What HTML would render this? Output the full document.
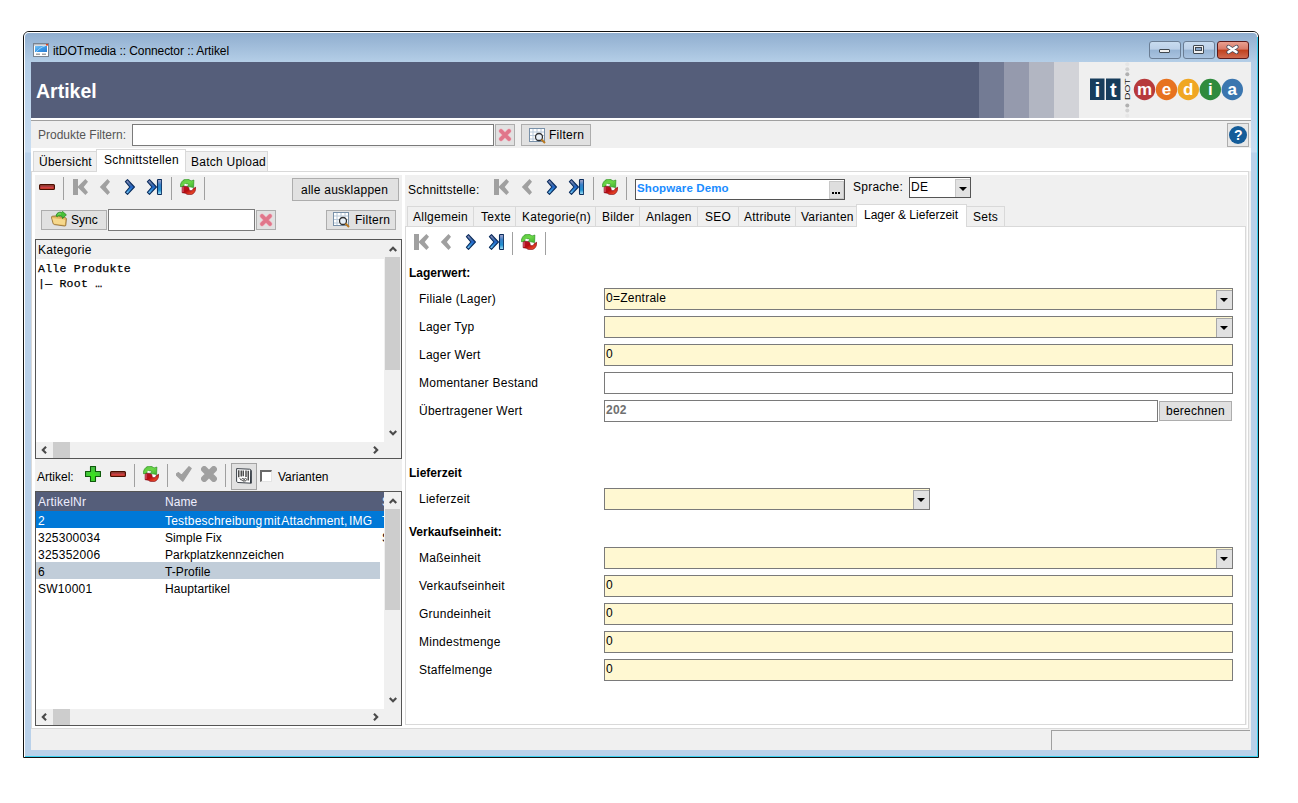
<!DOCTYPE html>
<html><head><meta charset="utf-8">
<style>
*{margin:0;padding:0;box-sizing:border-box}
html,body{width:1298px;height:803px;overflow:hidden;background:#fff;font-family:"Liberation Sans",sans-serif;font-size:12px;color:#000}
.a{position:absolute}
.t{position:absolute;white-space:nowrap;line-height:14px;letter-spacing:0.25px}
.btn{position:absolute;background:#e1e1e1;border:1px solid #adadad}
.fld{position:absolute;background:#fff;border:1px solid #7a7a7a}
.yel{background:#fff8d2}
.sep{position:absolute;width:1px;background:#a0a0a0}
.tab{position:absolute;background:#f0f0f0;border:1px solid #d9d9d9;border-bottom:none}
.dd{position:absolute;background:#e1e1e1;border-left:1px solid #a8a8a8;border-top:1px solid #a8a8a8}
.dd:after{content:"";position:absolute;left:3px;top:7px;border-left:4px solid transparent;border-right:4px solid transparent;border-top:4.5px solid #000}
</style></head><body>

<svg width="0" height="0" style="position:absolute">
<defs>
<linearGradient id="gBlue" x1="0" y1="0" x2="0" y2="1">
<stop offset="0" stop-color="#a898c0"/><stop offset="0.3" stop-color="#4a70a8"/><stop offset="0.5" stop-color="#1f62c8"/><stop offset="0.75" stop-color="#3a9ae0"/><stop offset="1" stop-color="#b0dcf8"/>
</linearGradient>
<linearGradient id="gBlue2" x1="0" y1="0" x2="0" y2="1">
<stop offset="0" stop-color="#b0a8c8"/><stop offset="0.35" stop-color="#3a80c8"/><stop offset="0.7" stop-color="#2090d0"/><stop offset="1" stop-color="#b0e8f8"/>
</linearGradient>
<linearGradient id="gRed" x1="0" y1="0" x2="0" y2="1">
<stop offset="0" stop-color="#a85a40"/><stop offset="0.4" stop-color="#a83c40"/><stop offset="0.7" stop-color="#e84040"/><stop offset="1" stop-color="#f06a40"/>
</linearGradient>
<symbol id="iFirstG" viewBox="0 0 16 16"><path d="M0,0H5V16H0Z M4.4,8L12.4,0L15,2.7L10.7,8L15,13.3L12.4,16Z" fill="#a0a0a0"/></symbol>
<symbol id="iPrevG" viewBox="0 0 16 16"><path d="M2.8,8L10.5,0L13,2.7L8.9,8L13,13.3L10.5,16Z" fill="#a0a0a0"/></symbol>
<symbol id="iNextB" viewBox="0 0 16 16"><path d="M5.5,0.6L12.4,8L5.5,15.4L3.4,13.3L7.8,8L3.4,2.7Z" fill="url(#gBlue)" stroke="#0a2d5e" stroke-width="1.1" stroke-linejoin="round"/></symbol>
<symbol id="iLastB" viewBox="0 0 16 16"><path d="M3.5,0.6L10.4,8L3.5,15.4L1.4,13.3L5.9,8L1.4,2.7Z" fill="url(#gBlue)" stroke="#0a2d5e" stroke-width="1.1" stroke-linejoin="round"/><rect x="11.5" y="0.5" width="4.2" height="15" rx="0.8" fill="url(#gBlue2)" stroke="#0a2d5e" stroke-width="1.1"/></symbol>
<symbol id="iRefresh" viewBox="0 0 16 16">
<linearGradient id="gRR" x1="0" y1="0" x2="1" y2="1"><stop offset="0" stop-color="#b01830"/><stop offset="0.45" stop-color="#b80c10"/><stop offset="0.8" stop-color="#e84828"/><stop offset="1" stop-color="#d02040"/></linearGradient>
<linearGradient id="gGG" x1="0" y1="0" x2="1" y2="1"><stop offset="0" stop-color="#58c040"/><stop offset="0.5" stop-color="#6cd848"/><stop offset="1" stop-color="#40b030"/></linearGradient>
<ellipse cx="10.9" cy="9.9" rx="2" ry="1.6" fill="#fff"/>
<path d="M2.1,7.1 L7.5,7.5 C8.6,8 9,9 9,10 C9.3,11.3 10.2,11.8 11.2,11.6 C12.2,11.4 13,10.5 13.3,9.4 L15.9,8.2 C16,11 14.5,14.8 11.5,15.5 L7.4,15.6 L5.2,14.2 L2.1,13.7 Z" fill="url(#gRR)" stroke="#7a0818" stroke-width="0.6"/>
<path d="M3,8 L3,13" stroke="#e07088" stroke-width="0.9"/>
<path d="M0.3,7.7 C0.3,3.5 2.8,0.3 6.5,0.2 C8.5,0.2 9.8,0.9 11,1.9 L13.9,1 L13.6,8.6 L7.2,7.3 L9.1,5.7 C8.3,5 7.3,4.6 6.3,4.7 C5,4.9 4.2,5.8 4,6.6 L2.5,7.4 Z" fill="url(#gGG)" stroke="#208818" stroke-width="0.6"/>
<ellipse cx="5.3" cy="5.6" rx="0.9" ry="0.8" fill="#fff"/>
</symbol>
<symbol id="iX" viewBox="0 0 14 14"><path d="M3,3L11,11M11,3L3,11" stroke="#f0b4c0" stroke-width="4.6" stroke-linecap="round"/><path d="M3,3L11,11M11,3L3,11" stroke="#e0768a" stroke-width="3.7" stroke-linecap="round"/></symbol>
<symbol id="iFilter" viewBox="0 0 18 16">
<rect x="0.5" y="0.5" width="15" height="13" fill="#fff" stroke="#7890a8"/>
<path d="M4,1V13 M8,1V13 M12,1V13 M1,4H15 M1,7.5H15 M1,11H15" stroke="#b8c8d8" stroke-width="1"/>
<circle cx="10" cy="9" r="3.5" fill="#e8f0f8" stroke="#303030" stroke-width="1.3"/>
<path d="M12.5,11.5L16,15" stroke="#b87820" stroke-width="2"/>
</symbol>
<symbol id="iMinus" viewBox="0 0 16 6"><rect x="0.6" y="0.6" width="14.8" height="4.8" rx="0.9" fill="url(#gRed)" stroke="#4a0e00" stroke-width="1.2"/></symbol>
<symbol id="iFolder" viewBox="0 0 16 16">
<path d="M0.4,6.2 C0.4,5.6 1,5.2 1.6,5.2 L4.5,5 L5.5,4.2 L8,4.6 L8.8,5.8 L13.5,6.4 C14.6,6.5 15.4,7 15.4,8 L14.8,14.2 C14.7,14.9 14.2,15.2 13.5,15 L3.5,13.6 C2.8,13.5 2.3,13 2.1,12.4 Z" fill="#e2b860" stroke="#8a6428" stroke-width="0.8"/>
<path d="M1.2,7 L12.8,8.4 C13.8,8.5 14.3,9 14.2,9.8 L13.8,14 L3.6,12.8 C3,12.7 2.7,12.3 2.6,11.8 Z" fill="#f6d88c"/>
<path d="M5.2,5.2 C5,2.2 8,0.6 10.5,1.4 L11.5,0.4 L15.4,3.8 L11.6,7.6 L11.2,5.6 C9.5,4.6 7.6,4.4 6.2,5.8 Z" fill="#48c038" stroke="#1a7a14" stroke-width="0.7"/>
<path d="M6.8,3.6 C7.6,2.8 8.8,2.6 9.8,3" stroke="#a0f080" stroke-width="0.8" fill="none"/>
</symbol>
<symbol id="iPlus" viewBox="0 0 16 16"><radialGradient id="gPl" cx="0.5" cy="0.62" r="0.6"><stop offset="0" stop-color="#38e818"/><stop offset="1" stop-color="#48b848"/></radialGradient><path d="M5.5,0.5H10.5V5.5H15.5V10.5H10.5V15.5H5.5V10.5H0.5V5.5H5.5Z" fill="url(#gPl)" stroke="#0e5a0a" stroke-width="1.1" stroke-linejoin="round"/></symbol>
<symbol id="iCheckG" viewBox="0 0 16 16"><path d="M0.6,7.8 L2.5,6.6 L5.6,9.2 L13,0.7 L15.2,2.5 L6.9,15.2 L0.6,9.2 Z" fill="#a0a0a0" stroke="#a0a0a0" stroke-width="1.2" stroke-linejoin="round"/></symbol>
<symbol id="iXG" viewBox="0 0 16 16"><path d="M3.25,3.25L12.75,12.75M12.75,3.25L3.25,12.75" stroke="#a0a0a0" stroke-width="6.3" stroke-linecap="round"/></symbol>
<symbol id="iBarcode" viewBox="0 0 16 16">
<path d="M0.6,0.6 L13.5,1.2 C14.5,1.3 15.3,1.8 15.3,2.8 L15.3,15.2 L2,14.5 C1,14.4 0.6,13.8 0.6,13 Z" fill="#fff" stroke="#3a4048" stroke-width="1"/>
<path d="M14.2,1.5 L15.3,2.8 L15.3,15.2 L14,14.9 Z" fill="#303840"/>
<path d="M2.8,2.2V9.2 M5.2,2.4V8.5 M7.2,2.5V8.2 M10,2.6V9 M12.2,2.8V12.6" stroke="#222" stroke-width="1.2"/>
<circle cx="6.8" cy="11.5" r="1.1" fill="none" stroke="#333" stroke-width="0.8"/>
<circle cx="9.5" cy="11.5" r="1.1" fill="none" stroke="#333" stroke-width="0.8"/>
<circle cx="8.2" cy="13.4" r="0.8" fill="none" stroke="#555" stroke-width="0.6"/>
<path d="M3.8,10.2 L5.2,12.4" stroke="#444" stroke-width="0.9"/>
</symbol>
<symbol id="aUp" viewBox="0 0 8 6"><path d="M0,4.3L4,0.3L8,4.3L6.5,5.8L4,3.3L1.5,5.8Z" fill="#4a4a4a"/></symbol>
<symbol id="aDown" viewBox="0 0 8 6"><path d="M0,1.7L4,5.7L8,1.7L6.5,0.2L4,2.7L1.5,0.2Z" fill="#4a4a4a"/></symbol>
<symbol id="aLeft" viewBox="0 0 6 8"><path d="M4.3,0L0.3,4L4.3,8L5.8,6.5L3.3,4L5.8,1.5Z" fill="#4a4a4a"/></symbol>
<symbol id="aRight" viewBox="0 0 6 8"><path d="M1.7,0L5.7,4L1.7,8L0.2,6.5L2.7,4L0.2,1.5Z" fill="#4a4a4a"/></symbol>
</defs></svg>

<!-- window frame -->
<div class="a" style="left:23px;top:31px;width:1236px;height:727px;border:1px solid #111;border-radius:6px 6px 0 0;background:#b9d1ea"></div>
<div class="a" style="left:24px;top:32px;width:1234px;height:725px;border:1px solid #fff;border-radius:5px 5px 0 0;border-bottom:none;background:linear-gradient(#90aecf,#b4cee7 29px,#bcd4ec 60px,#c9ddf1 119px,#b9d1ea 120px,#b9d1ea 100%)"></div>
<div class="a" style="left:25px;top:756px;width:1233px;height:1px;background:#3ad0f0"></div>
<div class="a" style="left:1257px;top:37px;width:1px;height:720px;background:#3ad0f0"></div>
<!-- title icon -->
<svg class="a" style="left:33px;top:43px" width="16" height="14" viewBox="0 0 16 14">
<rect x="0.5" y="0.5" width="15" height="13" fill="#fff" stroke="#7a8490"/>
<rect x="1" y="1" width="14" height="1.5" fill="#b8bcc4"/>
<rect x="13" y="1" width="2" height="1.5" fill="#e04020"/>
<defs><linearGradient id="gScr" x1="0" y1="0" x2="1" y2="1"><stop offset="0" stop-color="#7cc4f4"/><stop offset="0.5" stop-color="#3c9ae8"/><stop offset="1" stop-color="#2a7ad0"/></linearGradient></defs>
<rect x="2" y="3" width="12" height="6" fill="url(#gScr)"/>
<path d="M3,9 C6,6 8,4 12,3" stroke="#a8dcfc" stroke-width="0.8" fill="none"/>
<rect x="3" y="10.5" width="4" height="1.5" fill="#a0a4a8"/>
<rect x="9" y="10.5" width="4" height="1.5" fill="#a0a4a8"/>
</svg>
<div class="t" style="left:53px;top:44px;font-size:12px;letter-spacing:-0.08px;color:#000">itDOTmedia :: Connector :: Artikel</div>

<!-- content background -->
<div class="a" style="left:31px;top:62px;width:1220px;height:688px;background:#f0f0f0"></div>

<!-- header -->
<div class="a" style="left:31px;top:62px;width:1220px;height:56px;background:#efefef"></div>
<div class="a" style="left:31px;top:62px;width:948px;height:56px;background:#555e7a"></div>
<div class="a" style="left:979px;top:62px;width:25px;height:56px;background:#737b94"></div>
<div class="a" style="left:1004px;top:62px;width:25px;height:56px;background:#959aad"></div>
<div class="a" style="left:1029px;top:62px;width:25px;height:56px;background:#b2b6c2"></div>
<div class="a" style="left:1054px;top:62px;width:25px;height:56px;background:#d2d3d8"></div>
<div class="t" style="left:36px;top:79px;font-size:19.5px;line-height:24px;font-weight:bold;color:#fff;letter-spacing:0">Artikel</div>
<div class="a" style="left:31px;top:118px;width:1220px;height:2px;background:#fff"></div>
<div class="a" style="left:31px;top:120px;width:1220px;height:1px;background:#a0a0a0"></div>



<!-- logo -->
<svg class="a" style="left:1085px;top:62px" width="166" height="56" viewBox="0 0 166 56">
<rect x="5" y="16.5" width="14.5" height="21.5" fill="#173d5c"/>
<rect x="21" y="16.5" width="14.5" height="21.5" fill="#173d5c"/>
<text x="12.3" y="34.5" text-anchor="middle" font-family="Liberation Sans" font-weight="bold" font-size="21" fill="#fff">i</text>
<text x="28.3" y="34.5" text-anchor="middle" font-family="Liberation Sans" font-weight="bold" font-size="20" fill="#fff">t</text>
<circle cx="42.3" cy="2.2" r="2" fill="#e6e6e6"/>
<circle cx="42.3" cy="7.2" r="2" fill="#d2d2d2"/>
<circle cx="42.3" cy="12.2" r="2" fill="#b0b0b0"/>
<circle cx="42.3" cy="43.5" r="2" fill="#b0b0b0"/>
<circle cx="42.3" cy="48.6" r="2" fill="#d2d2d2"/>
<circle cx="42.3" cy="53.7" r="2" fill="#e6e6e6"/>
<text x="0" y="0" transform="translate(45.4,38) rotate(-90)" font-family="Liberation Sans" font-size="7.4" fill="#111" textLength="21.6" lengthAdjust="spacingAndGlyphs" style="letter-spacing:0">DOT</text>
<circle cx="59.5" cy="27.5" r="10.7" fill="#b73a3c"/>
<circle cx="81.5" cy="27.5" r="10.7" fill="#e7721f"/>
<circle cx="103.3" cy="27.5" r="10.7" fill="#f0a723"/>
<circle cx="125.3" cy="27.5" r="10.7" fill="#2f8b3d"/>
<circle cx="147.3" cy="27.5" r="10.7" fill="#3b76af"/>
<text x="59.5" y="33.3" text-anchor="middle" font-family="Liberation Sans" font-weight="bold" font-size="17" fill="#fff">m</text>
<text x="81.5" y="33.3" text-anchor="middle" font-family="Liberation Sans" font-weight="bold" font-size="17" fill="#fff">e</text>
<text x="103.3" y="33.3" text-anchor="middle" font-family="Liberation Sans" font-weight="bold" font-size="17" fill="#fff">d</text>
<text x="125.3" y="33.3" text-anchor="middle" font-family="Liberation Sans" font-weight="bold" font-size="17" fill="#fff">i</text>
<text x="147.3" y="33.3" text-anchor="middle" font-family="Liberation Sans" font-weight="bold" font-size="17" fill="#fff">a</text>
</svg>

<!-- window buttons -->
<div class="a" style="left:1149px;top:41px;width:32px;height:18px;border:1px solid #6a7d94;border-radius:3px;background:linear-gradient(#c8dbef 0,#bcd0e8 45%,#97b4d4 50%,#a9c3e0 100%)"></div>
<div class="a" style="left:1159px;top:49px;width:11px;height:4px;border:1px solid #404850;border-radius:1px;background:#f0f0f0"></div>
<div class="a" style="left:1183px;top:41px;width:32px;height:18px;border:1px solid #6a7d94;border-radius:3px;background:linear-gradient(#c8dbef 0,#bcd0e8 45%,#97b4d4 50%,#a9c3e0 100%)"></div>
<div class="a" style="left:1193px;top:45px;width:11px;height:9px;border:1px solid #404850;border-radius:1px;background:#f0f0f0"></div>
<div class="a" style="left:1195px;top:47px;width:7px;height:4px;background:#8aa8cc;border:1px solid #404850"></div>
<div class="a" style="left:1217px;top:41px;width:32px;height:18px;border:1px solid #5a1a1a;border-radius:3px;background:linear-gradient(#eaa090 0,#d87a68 45%,#c0401c 50%,#d06a50 100%)"></div>
<svg class="a" style="left:1226px;top:44px" width="13" height="11" viewBox="0 0 13 11"><path d="M2.5,2.9 L10.5,8.1 M10.5,2.9 L2.5,8.1" stroke="#3c4456" stroke-width="4.1" stroke-linecap="round"/><path d="M2.5,2.9 L10.5,8.1 M10.5,2.9 L2.5,8.1" stroke="#fff" stroke-width="2.6" stroke-linecap="round"/></svg>

<!-- filter row -->
<div class="t" style="left:38px;top:128px;color:#555;letter-spacing:0">Produkte Filtern:</div>
<div class="fld" style="left:132px;top:124px;width:362px;height:22px"></div>
<div class="btn" style="left:495px;top:124px;width:20px;height:22px"></div>
<svg class="a" style="left:498px;top:128px" width="14" height="14"><use href="#iX"/></svg>
<div class="btn" style="left:521px;top:124px;width:70px;height:22px"></div>
<svg class="a" style="left:529px;top:128px" width="18" height="16"><use href="#iFilter"/></svg>
<div class="t" style="left:549px;top:128px">Filtern</div>
<div class="btn" style="left:1227px;top:123px;width:22px;height:24px;background:#e8e8e8"></div>
<div class="a" style="left:1229px;top:126px;width:18px;height:18px;border-radius:50%;background:#145c99"></div>
<div class="t" style="left:1234px;top:128px;font-weight:bold;color:#fff;font-size:14px;letter-spacing:0">?</div>

<!-- top tabs row -->
<div class="a" style="left:31px;top:148px;width:1220px;height:23px;background:#fff"></div>
<div class="tab" style="left:33px;top:151px;width:64px;height:20px"></div>
<div class="t" style="left:39px;top:155px">Übersicht</div>
<div class="a" style="left:96px;top:149px;width:90px;height:23px;background:#fff;border:1px solid #d9d9d9;border-bottom:none"></div>
<div class="t" style="left:104px;top:153px">Schnittstellen</div>
<div class="tab" style="left:185px;top:151px;width:83px;height:20px"></div>
<div class="t" style="left:191px;top:155px">Batch Upload</div>

<!-- main panel -->
<div class="a" style="left:31px;top:171px;width:1218px;height:558px;background:#fff;border:1px solid #d9d9d9"></div>
<div class="a" style="left:35px;top:175px;width:367px;height:550px;background:#f0f0f0"></div>
<div class="a" style="left:405px;top:175px;width:842px;height:550px;background:#f0f0f0"></div>
<div class="a" style="left:97px;top:171px;width:88px;height:1px;background:#fff"></div>

<!-- LEFT PANEL -->
<svg class="a" style="left:39px;top:184px" width="16" height="6"><use href="#iMinus"/></svg>
<div class="sep" style="left:63px;top:177px;height:23px"></div>
<svg class="a" style="left:73px;top:179px" width="16" height="16"><use href="#iFirstG"/></svg>
<svg class="a" style="left:97px;top:179px" width="16" height="16"><use href="#iPrevG"/></svg>
<svg class="a" style="left:122px;top:179px" width="16" height="16"><use href="#iNextB"/></svg>
<svg class="a" style="left:146px;top:179px" width="16" height="16"><use href="#iLastB"/></svg>
<div class="sep" style="left:171px;top:177px;height:23px"></div>
<svg class="a" style="left:180px;top:179px" width="16" height="16"><use href="#iRefresh"/></svg>
<div class="sep" style="left:204px;top:177px;height:23px"></div>
<div class="btn" style="left:292px;top:178px;width:107px;height:23px"></div>
<div class="t" style="left:301px;top:183px">alle ausklappen</div>

<div class="btn" style="left:41px;top:210px;width:66px;height:20px"></div>
<svg class="a" style="left:51px;top:211px" width="16" height="16"><use href="#iFolder"/></svg>
<div class="t" style="left:71px;top:213px;letter-spacing:0">Sync</div>
<div class="fld" style="left:108px;top:209px;width:147px;height:22px"></div>
<div class="btn" style="left:256px;top:210px;width:20px;height:20px"></div>
<svg class="a" style="left:259px;top:213px" width="14" height="14"><use href="#iX"/></svg>
<div class="btn" style="left:326px;top:210px;width:70px;height:20px"></div>
<svg class="a" style="left:333px;top:212px" width="18" height="16"><use href="#iFilter"/></svg>
<div class="t" style="left:355px;top:213px">Filtern</div>

<!-- category tree -->
<div class="a" style="left:35px;top:239px;width:367px;height:220px;border:1px solid #555;background:#fff"></div>
<div class="a" style="left:36px;top:240px;width:348px;height:19px;background:#f0f0f0"></div>
<div class="t" style="left:38px;top:243px">Kategorie</div>
<div class="t" style="left:38px;top:262px;font-family:'Liberation Mono',monospace;font-size:11.5px;-webkit-text-stroke:0.25px #000">Alle Produkte</div>
<div class="t" style="left:38px;top:277px;font-family:'Liberation Mono',monospace;font-size:11.5px;-webkit-text-stroke:0.25px #000">|— Root …</div>
<div class="a" style="left:384px;top:240px;width:17px;height:202px;background:#f0f0f0"></div>
<div class="a" style="left:385px;top:257px;width:15px;height:113px;background:#cdcdcd"></div>
<svg class="a" style="left:389px;top:246px" width="8" height="6"><use href="#aUp"/></svg>
<svg class="a" style="left:389px;top:430px" width="8" height="6"><use href="#aDown"/></svg>
<div class="a" style="left:36px;top:442px;width:365px;height:16px;background:#f0f0f0"></div>
<div class="a" style="left:53px;top:442px;width:17px;height:16px;background:#cdcdcd"></div>
<svg class="a" style="left:41px;top:446px" width="6" height="8"><use href="#aLeft"/></svg>
<svg class="a" style="left:373px;top:446px" width="6" height="8"><use href="#aRight"/></svg>

<!-- articles toolbar -->
<div class="t" style="left:37px;top:470px;letter-spacing:0">Artikel:</div>
<svg class="a" style="left:85px;top:466px" width="16" height="16"><use href="#iPlus"/></svg>
<svg class="a" style="left:110px;top:471px" width="16" height="6"><use href="#iMinus"/></svg>
<div class="sep" style="left:134px;top:464px;height:23px"></div>
<svg class="a" style="left:143px;top:466px" width="16" height="16"><use href="#iRefresh"/></svg>
<div class="sep" style="left:167px;top:464px;height:23px"></div>
<svg class="a" style="left:176px;top:466px" width="16" height="16"><use href="#iCheckG"/></svg>
<svg class="a" style="left:201px;top:466px" width="16" height="16"><use href="#iXG"/></svg>
<div class="sep" style="left:225px;top:464px;height:23px"></div>
<div class="btn" style="left:231px;top:463px;width:26px;height:27px;background:#e1e1e1;border-color:#a4a4a4"></div>
<svg class="a" style="left:236px;top:468px" width="16" height="16"><use href="#iBarcode"/></svg>
<div class="a" style="left:260px;top:470px;width:12px;height:12px;background:#fff;border:2px solid #6a6a6a;border-right:1px solid #e4e4e4;border-bottom:1px solid #e4e4e4"></div>
<div class="t" style="left:278px;top:470px;letter-spacing:0">Varianten</div>

<!-- articles table -->
<div class="a" style="left:35px;top:491px;width:367px;height:235px;border:1px solid #555;background:#fff"></div>
<div class="a" style="left:36px;top:492px;width:348px;height:19px;background:#555e7a"></div>
<div class="t" style="left:38px;top:495px;color:#eef">ArtikelNr</div>
<div class="t" style="left:165px;top:495px;letter-spacing:0.08px;color:#eef">Name</div>
<div class="a" style="left:36px;top:511px;width:348px;height:17px;background:#0078d7"></div>
<div class="a" style="left:36px;top:562px;width:344px;height:17px;background:#c1cdd9"></div>
<div class="t" style="left:38px;top:514px;color:#fff">2</div>
<div class="t" style="left:165px;top:514px;letter-spacing:0.2px;color:#fff;word-spacing:-2px">Testbeschreibung mit Attachment, IMG</div>
<div class="t" style="left:38px;top:531px">325300034</div>
<div class="t" style="left:165px;top:531px;letter-spacing:0.08px">Simple Fix</div>
<div class="t" style="left:38px;top:548px">325352006</div>
<div class="t" style="left:165px;top:548px;letter-spacing:0.08px">Parkplatzkennzeichen</div>
<div class="t" style="left:38px;top:565px">6</div>
<div class="t" style="left:165px;top:565px;letter-spacing:0.08px">T-Profile</div>
<div class="t" style="left:38px;top:582px">SW10001</div>
<div class="t" style="left:165px;top:582px;letter-spacing:0.08px">Hauptartikel</div>
<div class="a" style="left:381px;top:492px;width:3px;height:53px;overflow:hidden"><div class="t" style="left:1px;top:3px;color:#eef">S</div><div class="t" style="left:1px;top:22px;color:#fff">T</div><div class="t" style="left:1px;top:39px">S</div></div>
<div class="a" style="left:384px;top:492px;width:17px;height:217px;background:#f0f0f0"></div>
<div class="a" style="left:385px;top:509px;width:15px;height:101px;background:#cdcdcd"></div>
<svg class="a" style="left:389px;top:498px" width="8" height="6"><use href="#aUp"/></svg>
<svg class="a" style="left:389px;top:697px" width="8" height="6"><use href="#aDown"/></svg>
<div class="a" style="left:36px;top:709px;width:365px;height:16px;background:#f0f0f0"></div>
<div class="a" style="left:53px;top:709px;width:17px;height:16px;background:#cdcdcd"></div>
<svg class="a" style="left:41px;top:713px" width="6" height="8"><use href="#aLeft"/></svg>
<svg class="a" style="left:373px;top:713px" width="6" height="8"><use href="#aRight"/></svg>

<!-- RIGHT PANEL -->
<div class="t" style="left:408px;top:183px">Schnittstelle:</div>
<svg class="a" style="left:494px;top:179px" width="16" height="16"><use href="#iFirstG"/></svg>
<svg class="a" style="left:519px;top:179px" width="16" height="16"><use href="#iPrevG"/></svg>
<svg class="a" style="left:544px;top:179px" width="16" height="16"><use href="#iNextB"/></svg>
<svg class="a" style="left:568px;top:179px" width="16" height="16"><use href="#iLastB"/></svg>
<div class="sep" style="left:593px;top:177px;height:23px"></div>
<svg class="a" style="left:602px;top:179px" width="16" height="16"><use href="#iRefresh"/></svg>
<div class="sep" style="left:626px;top:177px;height:23px"></div>
<div class="fld" style="left:635px;top:179px;width:210px;height:21px;border-color:#555"></div>
<div class="t" style="left:637px;top:181px;font-weight:bold;color:#1a8cff;font-size:11.5px;letter-spacing:0.12px">Shopware Demo</div>
<div class="btn" style="left:829px;top:181px;width:15px;height:18px;background:#dedede;border-color:#c8c8c8"></div>
<div class="a" style="left:832px;top:192px;width:2px;height:2px;background:#000"></div>
<div class="a" style="left:835px;top:192px;width:2px;height:2px;background:#000"></div>
<div class="a" style="left:838px;top:192px;width:2px;height:2px;background:#000"></div>
<div class="t" style="left:853px;top:180px">Sprache:</div>
<div class="fld" style="left:909px;top:177px;width:62px;height:21px;border-color:#555"></div>
<div class="t" style="left:911px;top:180px">DE</div>
<div class="dd" style="left:955px;top:179px;width:15px;height:18px;border-color:#c8c8c8"></div>

<!-- right tabs -->
<div class="a" style="left:405px;top:226px;width:841px;height:499px;background:#fff;border:1px solid #d9d9d9"></div>
<div class="tab" style="left:407px;top:206px;width:67px;height:20px"></div>
<div class="tab" style="left:473px;top:206px;width:43px;height:20px"></div>
<div class="tab" style="left:515px;top:206px;width:81px;height:20px"></div>
<div class="tab" style="left:595px;top:206px;width:45px;height:20px"></div>
<div class="tab" style="left:639px;top:206px;width:59px;height:20px"></div>
<div class="tab" style="left:697px;top:206px;width:42px;height:20px"></div>
<div class="tab" style="left:738px;top:206px;width:58px;height:20px"></div>
<div class="tab" style="left:795px;top:206px;width:63px;height:20px"></div>
<div class="a" style="left:856px;top:204px;width:111px;height:23px;background:#fff;border:1px solid #d9d9d9;border-bottom:none"></div>
<div class="tab" style="left:966px;top:206px;width:39px;height:20px"></div>
<div class="t" style="left:413px;top:210px">Allgemein</div>
<div class="t" style="left:481px;top:210px">Texte</div>
<div class="t" style="left:522px;top:210px">Kategorie(n)</div>
<div class="t" style="left:602px;top:210px">Bilder</div>
<div class="t" style="left:646px;top:210px">Anlagen</div>
<div class="t" style="left:705px;top:210px">SEO</div>
<div class="t" style="left:744px;top:210px">Attribute</div>
<div class="t" style="left:801px;top:210px">Varianten</div>
<div class="t" style="left:864px;top:208px;letter-spacing:0">Lager &amp; Lieferzeit</div>
<div class="t" style="left:973px;top:210px">Sets</div>

<!-- inner toolbar -->
<svg class="a" style="left:414px;top:234px" width="16" height="16"><use href="#iFirstG"/></svg>
<svg class="a" style="left:438px;top:234px" width="16" height="16"><use href="#iPrevG"/></svg>
<svg class="a" style="left:463px;top:234px" width="16" height="16"><use href="#iNextB"/></svg>
<svg class="a" style="left:488px;top:234px" width="16" height="16"><use href="#iLastB"/></svg>
<div class="sep" style="left:512px;top:232px;height:23px"></div>
<svg class="a" style="left:521px;top:234px" width="16" height="16"><use href="#iRefresh"/></svg>
<div class="sep" style="left:545px;top:232px;height:23px"></div>

<!-- form -->
<div class="t" style="left:409px;top:266px;font-weight:bold;letter-spacing:0">Lagerwert:</div>
<div class="t" style="left:419px;top:292px">Filiale (Lager)</div>
<div class="t" style="left:419px;top:320px">Lager Typ</div>
<div class="t" style="left:419px;top:348px">Lager Wert</div>
<div class="t" style="left:419px;top:376px">Momentaner Bestand</div>
<div class="t" style="left:419px;top:404px">Übertragener Wert</div>
<div class="fld yel" style="left:604px;top:288px;width:629px;height:22px"></div>
<div class="t" style="left:606px;top:291px">0=Zentrale</div>
<div class="dd" style="left:1216px;top:290px;width:16px;height:19px"></div>
<div class="fld yel" style="left:604px;top:316px;width:629px;height:22px"></div>
<div class="dd" style="left:1216px;top:318px;width:16px;height:19px"></div>
<div class="fld yel" style="left:604px;top:344px;width:629px;height:22px"></div>
<div class="t" style="left:606px;top:347px">0</div>
<div class="fld" style="left:604px;top:372px;width:629px;height:22px"></div>
<div class="fld" style="left:604px;top:400px;width:554px;height:22px"></div>
<div class="t" style="left:606px;top:403px;font-weight:bold;color:#707070">202</div>
<div class="btn" style="left:1159px;top:401px;width:73px;height:20px"></div>
<div class="t" style="left:1166px;top:404px">berechnen</div>

<div class="t" style="left:409px;top:466px;font-weight:bold;letter-spacing:0">Lieferzeit</div>
<div class="t" style="left:419px;top:492px">Lieferzeit</div>
<div class="fld yel" style="left:604px;top:488px;width:326px;height:22px"></div>
<div class="dd" style="left:913px;top:490px;width:16px;height:19px"></div>

<div class="t" style="left:409px;top:525px;font-weight:bold;letter-spacing:0">Verkaufseinheit:</div>
<div class="t" style="left:419px;top:551px">Maßeinheit</div>
<div class="t" style="left:419px;top:579px">Verkaufseinheit</div>
<div class="t" style="left:419px;top:607px">Grundeinheit</div>
<div class="t" style="left:419px;top:635px">Mindestmenge</div>
<div class="t" style="left:419px;top:663px">Staffelmenge</div>
<div class="fld yel" style="left:604px;top:547px;width:629px;height:22px"></div>
<div class="dd" style="left:1216px;top:549px;width:16px;height:19px"></div>
<div class="fld yel" style="left:604px;top:575px;width:629px;height:22px"></div>
<div class="t" style="left:606px;top:578px">0</div>
<div class="fld yel" style="left:604px;top:603px;width:629px;height:22px"></div>
<div class="t" style="left:606px;top:606px">0</div>
<div class="fld yel" style="left:604px;top:631px;width:629px;height:22px"></div>
<div class="t" style="left:606px;top:634px">0</div>
<div class="fld yel" style="left:604px;top:659px;width:629px;height:22px"></div>
<div class="t" style="left:606px;top:662px">0</div>

<!-- status bar -->
<div class="a" style="left:31px;top:729px;width:1220px;height:21px;background:#f0f0f0"></div>
<div class="a" style="left:1051px;top:730px;width:199px;height:20px;border-top:1px solid #a0a0a0;border-left:1px solid #a0a0a0"></div>
</body></html>
